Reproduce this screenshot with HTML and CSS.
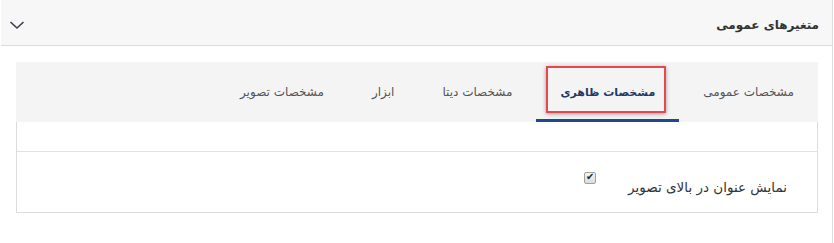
FILE: index.html
```html
<!DOCTYPE html>
<html lang="fa" dir="rtl">
<head>
  <meta charset="UTF-8">
  <meta name="viewport" content="width=device-width, initial-scale=1.0">
  <title>متغیرهای عمومی</title>
  <link rel="stylesheet" href="styles.css">
</head>
<body>
  <div class="panel">
    <div class="panel-header">
      <h2 class="panel-title">متغیرهای عمومی</h2>
      <span class="chevron">
        <svg width="16" height="10" viewBox="0 0 16 10"><path d="M1.5 2 L8 8 L14.5 2" fill="none" stroke="#3a3f4f" stroke-width="1.6"/></svg>
      </span>
    </div>

    <div class="panel-body">
      <ul class="tabs">
        <li class="tab">مشخصات عمومی</li>
        <li class="tab active"><span class="highlight"></span>مشخصات ظاهری</li>
        <li class="tab">مشخصات دیتا</li>
        <li class="tab">ابزار</li>
        <li class="tab">مشخصات تصویر</li>
      </ul>

      <div class="tab-content">
        <div class="row-empty"></div>
        <div class="row">
          <label class="field-label" for="showTitle">نمایش عنوان در بالای تصویر</label>
          <input type="checkbox" id="showTitle" class="check" checked>
        </div>
      </div>
    </div>
  </div>
</body>
</html>
```

FILE: styles.css
```css
body {
  font-family: "DejaVu Sans", sans-serif;
  background: #fff;
  color: #333;
  margin: 0;
}

.panel {
  width: 832px;
  height: 243px;
  border-right: 1px solid #dcdcdc;
  box-sizing: border-box;
  margin-right: 1px;
}

.panel-header {
  display: flex;
  align-items: center;
  justify-content: space-between;
  height: 45px;
  background: #f7f7f7;
  border-bottom: 1px solid #dcdcdc;
  padding: 0 13px 0 8px;
}

.panel-title {
  margin: 0;
  font-size: 12px;
  font-weight: bold;
  color: #333;
  padding-top: 4px;
}

.chevron {
  display: flex;
  padding-top: 4px;
}

.panel-body {
  padding: 16px 14px 0 15px;
}

.tabs {
  display: flex;
  list-style: none;
  margin: 0;
  padding: 0;
  height: 60px;
  background: #f4f4f4;
}

.tab {
  position: relative;
  display: flex;
  align-items: center;
  padding: 0 24px;
  font-size: 12px;
  color: #555;
  border-bottom: 3px solid transparent;
  padding-top: 3px;
}

.tab.active {
  font-size: 11px;
  font-weight: bold;
  color: #1f3a68;
  border-bottom-color: #1e4a8d;
}

.highlight {
  position: absolute;
  top: 4px;
  bottom: 6px;
  left: 10px;
  right: 13px;
  border: 2px solid #e5484d;
  box-shadow: 0 1px 4px rgba(0, 0, 0, 0.35);
}

.tab-content {
  border: 1px solid #dcdcdc;
  border-top: none;
}

.row-empty {
  height: 29px;
  border-bottom: 1px solid #e2e2e2;
}

.row {
  display: flex;
  align-items: center;
  height: 60px;
  padding-right: 30px;
}

.field-label {
  font-size: 13.5px;
  color: #333;
  padding-top: 10px;
}

.check {
  appearance: none;
  position: relative;
  margin: 0 32px 8px 0;
  width: 12px;
  height: 12px;
  border: 1px solid #a0a0a0;
  border-radius: 2px;
  background: linear-gradient(#f4f4f4, #dcdcdc);
}

.check:checked::after {
  content: "✔";
  position: absolute;
  top: -2px;
  left: 1px;
  font-size: 10px;
  color: #222;
}
```
